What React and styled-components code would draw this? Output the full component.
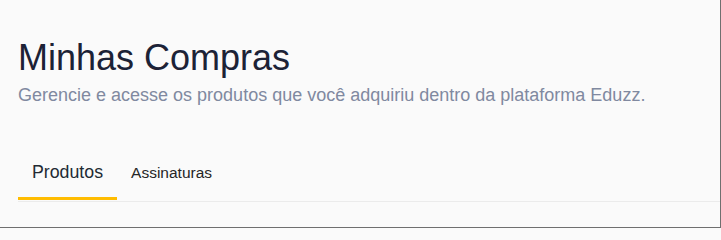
import React, { useState } from "react";
import styled, { createGlobalStyle } from "styled-components";

const GlobalStyle = createGlobalStyle`
  html, body {
    margin: 0;
    padding: 0;
    background: #fafafa;
  }
  body {
    font-family: "Liberation Sans", Arial, sans-serif;
  }
  * {
    box-sizing: border-box;
  }
`;

const Frame = styled.div`
  width: 721px;
  height: 228px;
  border-right: 1px solid #6f6f6f;
  border-bottom: 1px solid #6f6f6f;
  background: #fafafa;
  padding: 37px 0 0 18px;
  overflow: hidden;
`;

const Header = styled.header`
  display: flex;
  flex-direction: column;
  gap: 4px;
`;

const Title = styled.h1`
  margin: 0;
  font-size: 36px;
  line-height: 42px;
  font-weight: 400;
  color: #1c2236;
`;

const Subtitle = styled.p`
  margin: 0;
  font-size: 18px;
  line-height: 24px;
  color: #8089a0;
`;

const TabList = styled.nav`
  display: flex;
  align-items: baseline;
  margin-top: 53px;
  border-bottom: 1px solid #ebebeb;
`;

const Tab = styled.button`
  appearance: none;
  background: none;
  border: none;
  border-bottom: 3px solid ${(p) => (p.$active ? "#ffbc00" : "transparent")};
  padding: 0 14px 13px;
  margin: 0;
  font-family: inherit;
  font-size: ${(p) => (p.$active ? "17.75px" : "15.5px")};
  line-height: 24px;
  color: ${(p) => (p.$active ? "#222a33" : "#262626")};
  cursor: pointer;
`;

function App() {
  const [tab, setTab] = useState("produtos");

  return (
    <>
      <GlobalStyle />
      <Frame>
        <Header>
          <Title>Minhas Compras</Title>
          <Subtitle>
            Gerencie e acesse os produtos que você adquiriu dentro da plataforma Eduzz.
          </Subtitle>
        </Header>
        <TabList>
          <Tab $active={tab === "produtos"} onClick={() => setTab("produtos")}>
            Produtos
          </Tab>
          <Tab $active={tab === "assinaturas"} onClick={() => setTab("assinaturas")}>
            Assinaturas
          </Tab>
        </TabList>
      </Frame>
    </>
  );
}

export default App;
